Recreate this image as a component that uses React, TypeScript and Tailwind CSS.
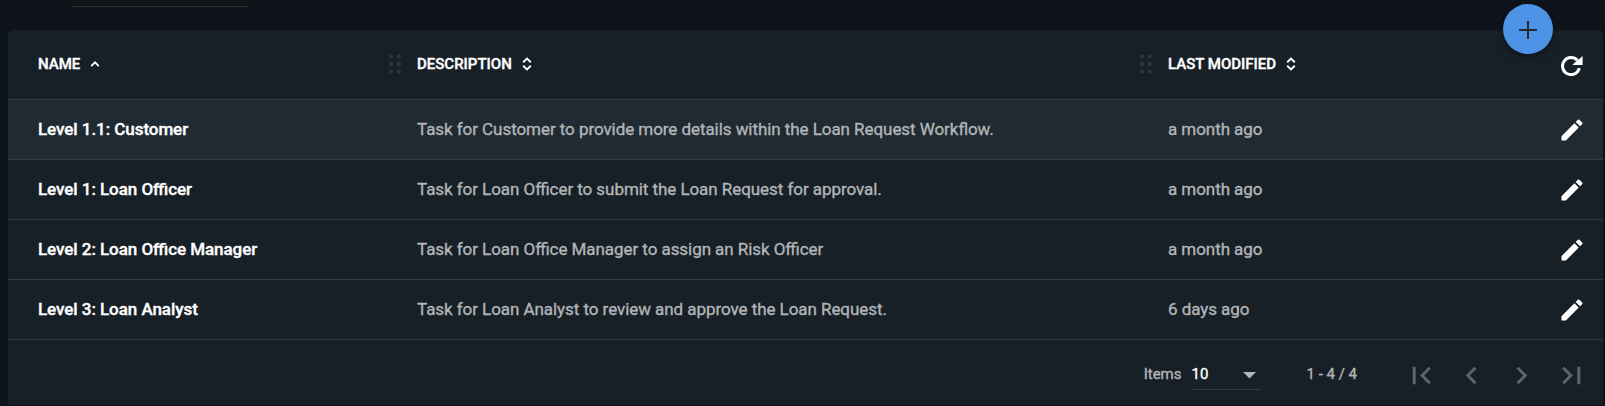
import type { ReactNode } from "react";
import { MdEdit } from "react-icons/md";

const rows = [
  {
    name: "Level 1.1: Customer",
    desc: "Task for Customer to provide more details within the Loan Request Workflow.",
    modified: "a month ago",
  },
  {
    name: "Level 1: Loan Officer",
    desc: "Task for Loan Officer to submit the Loan Request for approval.",
    modified: "a month ago",
  },
  {
    name: "Level 2: Loan Office Manager",
    desc: "Task for Loan Office Manager to assign an Risk Officer",
    modified: "a month ago",
  },
  {
    name: "Level 3: Loan Analyst",
    desc: "Task for Loan Analyst to review and approve the Loan Request.",
    modified: "6 days ago",
  },
];

const columns = "grid grid-cols-[379px_751px_1fr_28px] items-center pl-[30px] pr-[17px]";

function DragHandle() {
  return (
    <svg width="12" height="20" viewBox="0 0 12 20" fill="#2f363d">
      {[2.2, 9.7].map((x) =>
        [2.5, 10, 17.5].map((y) => <circle key={`${x}-${y}`} cx={x} cy={y} r="2.1" />)
      )}
    </svg>
  );
}

function SortIcon({ active }: { active?: boolean }) {
  return (
    <svg width="10" height="14" viewBox="0 0 10 14" fill="none" stroke="#fff" strokeWidth="1.9">
      {active ? (
        <path d="M1.2 9.2 5 5.4l3.8 3.8" />
      ) : (
        <path d="M1.2 5.2 5 1.6l3.8 3.6M1.2 8.8 5 12.4l3.8-3.6" />
      )}
    </svg>
  );
}

function HeaderCell({ label, active, handle }: { label: string; active?: boolean; handle?: boolean }) {
  return (
    <div className="flex items-center">
      <span className="mr-[10px]">{label}</span>
      <SortIcon active={active} />
      {handle && (
        <span className="ml-auto mr-4">
          <DragHandle />
        </span>
      )}
    </div>
  );
}

function PageButton({ label, children }: { label: string; children: ReactNode }) {
  return (
    <button aria-label={label} className="mt-[3px] flex h-[50px] w-[50px] items-center justify-center">
      <svg width="35" height="35" viewBox="0 0 24 24" fill="#5f6469">
        {children}
      </svg>
    </button>
  );
}

export default function App() {
  return (
    <div className="relative h-[406px] overflow-hidden bg-[#0f131a] pl-2 pr-[2px] font-[Roboto,sans-serif] text-[17px] text-[#b2b5b7] [-webkit-text-stroke:0.35px]">
      <div className="ml-16 h-[7px] w-[175px] border-b border-[#2c3033]" />

      <div className="mt-[23px] h-[375px] rounded-t-[5px] bg-[#182027]">
        <div className={`${columns} h-[70px] border-b border-[#333d46] pb-px text-[15px] font-medium text-white`}>
          <HeaderCell label="NAME" active handle />
          <HeaderCell label="DESCRIPTION" handle />
          <HeaderCell label="LAST MODIFIED" />
          <button aria-label="Refresh" className="mt-1 flex justify-center">
            <svg width="22" height="20" viewBox="0 0 22 20">
              <path d="M16.4 4.4A8.5 8.5 0 1 0 18.3 12.2" fill="none" stroke="#fff" strokeWidth="3" />
              <path d="M21.6 0v9H11.4l3.3-3.2 1.7-1.3z" fill="#fff" />
            </svg>
          </button>
        </div>

        {rows.map((row, index) => (
          <div
            key={row.name}
            className={`${columns} h-[60px] border-b border-[#333d46] tracking-[-0.06px] [font-feature-settings:'liga'] ${index === 0 ? "bg-[#202a32]" : ""}`}
          >
            <span className="font-medium text-white">{row.name}</span>
            <span>{row.desc}</span>
            <span>{row.modified}</span>
            <button aria-label="Edit" className="mt-px">
              <MdEdit className="h-7 w-7 text-white" />
            </button>
          </div>
        ))}

        <div className="flex h-[67px] items-center justify-end pr-[7px] text-[15px]">
          <span className="mr-[10px] pt-[2px]">Items</span>
          <div className="mr-[45px] flex h-[32px] w-[70px] items-center justify-between border-b border-[#343b41] pr-[5px] pt-[2px] text-white">
            10
            <svg width="13" height="7" viewBox="0 0 13 7" fill="#b2b5b7" className="mt-[2px]">
              <path d="M0 0h13L6.5 6.5z" />
            </svg>
          </div>
          <span className="mr-[39px] pt-[2px]">1 - 4 / 4</span>
          <PageButton label="First page">
            <path d="M18.41 16.59 13.82 12l4.59-4.59L17 6l-6 6 6 6zM6 6h2v12H6z" />
          </PageButton>
          <PageButton label="Previous page">
            <path d="M15.41 7.41 14 6l-6 6 6 6 1.41-1.41L10.83 12z" />
          </PageButton>
          <PageButton label="Next page">
            <path d="M10 6 8.59 7.41 13.17 12l-4.58 4.59L10 18l6-6z" />
          </PageButton>
          <PageButton label="Last page">
            <path d="M5.59 7.41 10.18 12l-4.59 4.59L7 18l6-6-6-6zM16 6h2v12h-2z" />
          </PageButton>
        </div>
      </div>

      <button
        aria-label="Add"
        className="absolute left-[1503px] top-1 flex h-[50px] w-[50px] items-center justify-center rounded-full bg-[#4d94e8] pt-[2px] shadow-[0_4px_8px_rgba(0,0,0,0.35)]"
      >
        <svg width="18" height="18" viewBox="0 0 18 18" stroke="#262a30" strokeWidth="2">
          <path d="M9 0v18M0 9h18" />
        </svg>
      </button>
    </div>
  );
}
